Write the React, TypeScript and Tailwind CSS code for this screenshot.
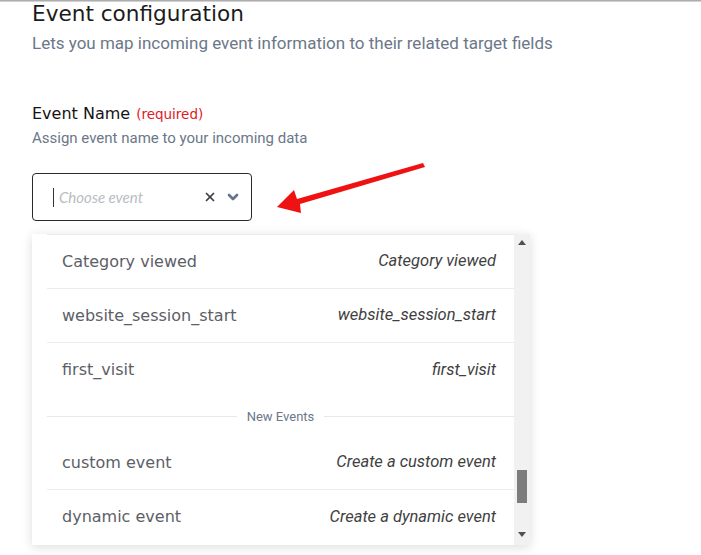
import { X, ChevronDown } from 'lucide-react';

const rows = [
  { name: 'Category viewed', desc: 'Category viewed' },
  { name: 'website_session_start', desc: 'website_session_start' },
  { name: 'first_visit', desc: 'first_visit', last: true },
];

const newRows = [
  { name: 'custom event', desc: 'Create a custom event' },
  { name: 'dynamic event', desc: 'Create a dynamic event', last: true },
];

function OptionRow({ name, desc, last }: { name: string; desc: string; last?: boolean }) {
  return (
    <div
      className={
        'ml-[15px] h-[54px] flex items-center justify-between pl-[15px] pr-[18px] ' +
        (last ? '' : 'border-b border-[#ececec]')
      }
    >
      <span className="text-[16px] text-[#5c6066] font-['DejaVu_Sans',sans-serif]">{name}</span>
      <span className="text-[16.5px] italic text-[#3f3f3f] font-['Roboto',sans-serif]">{desc}</span>
    </div>
  );
}

export default function App() {
  return (
    <div className="relative w-[701px] h-[555px] overflow-hidden bg-white">
      <div className="h-[2px] bg-gradient-to-b from-[#9a9a9a] to-[#e5e5e5]" />

      <div className="px-8">
        <h1 className="text-[21.6px] leading-[26px] text-[#1c1c1c] -mt-[1px] font-['DejaVu_Sans',sans-serif]">
          Event configuration
        </h1>
        <p className="mt-[4px] text-[17px] leading-[24px] text-[#6b7789] font-['Roboto',sans-serif]">
          Lets you map incoming event information to their related target fields
        </p>

        <div className="mt-[47px] h-[24px] leading-[24px] flex items-baseline gap-[6px]">
          <span className="text-[16px] text-[#141414] font-['DejaVu_Sans',sans-serif]">Event Name</span>
          <span className="text-[13.5px] text-[#e0191f] font-['DejaVu_Sans',sans-serif]">(required)</span>
        </div>
        <p className="mt-[2px] text-[15px] leading-[20px] text-[#6b7789] font-['Roboto',sans-serif]">
          Assign event name to your incoming data
        </p>

        <div className="mt-[25px] w-[220px] h-[48px] border border-[#2a2a2a] rounded-[4px] flex items-center pl-[20px] pr-[10px]">
          <span className="w-[1px] h-[19px] bg-[#333]" />
          <span className="ml-[5px] flex-1 text-[15px] italic text-[#b8bcc2] font-['Lato',sans-serif]">
            Choose event
          </span>
          <X className="w-[14px] h-[14px] text-[#3a3f45]" strokeWidth={3} />
          <ChevronDown className="ml-[8px] w-[16px] h-[16px] text-[#64748b]" strokeWidth={4} />
        </div>

        <div className="mt-[13px] w-[498px] h-[311px] bg-white flex shadow-[0_2px_10px_rgba(0,0,0,0.14)]">
          <div className="flex-1 overflow-hidden">
            <div className="ml-[15px] border-t border-[#ececec]" />
            {rows.map((r) => (
              <OptionRow key={r.name} {...r} />
            ))}
            <div className="h-[39px] flex items-center pl-[15px] gap-[10px]">
              <div className="flex-1 border-t border-[#e8e8e8]" />
              <span className="text-[13px] text-[#6b7789] font-['Roboto',sans-serif]">New Events</span>
              <div className="flex-1 border-t border-[#e8e8e8]" />
            </div>
            {newRows.map((r) => (
              <OptionRow key={r.name} {...r} />
            ))}
          </div>
          <div className="w-[16px] bg-[#f1f1f1] flex flex-col items-center">
            <svg width="8" height="5" viewBox="0 0 8 5" className="mt-[6px]">
              <polygon points="4,0 8,5 0,5" fill="#505050" />
            </svg>
            <div className="mt-[225px] w-[10px] h-[33px] bg-[#7d7d7d]" />
            <svg width="8" height="5" viewBox="0 0 8 5" className="mt-[29px]">
              <polygon points="0,0 8,0 4,5" fill="#505050" />
            </svg>
          </div>
        </div>
      </div>

      <svg className="absolute left-0 top-0" width="701" height="555" viewBox="0 0 701 555">
        <polygon
          points="277,207 294,190 297,199 423,163 425,167 300,204 301,213"
          fill="#f01212"
        />
      </svg>
    </div>
  );
}
